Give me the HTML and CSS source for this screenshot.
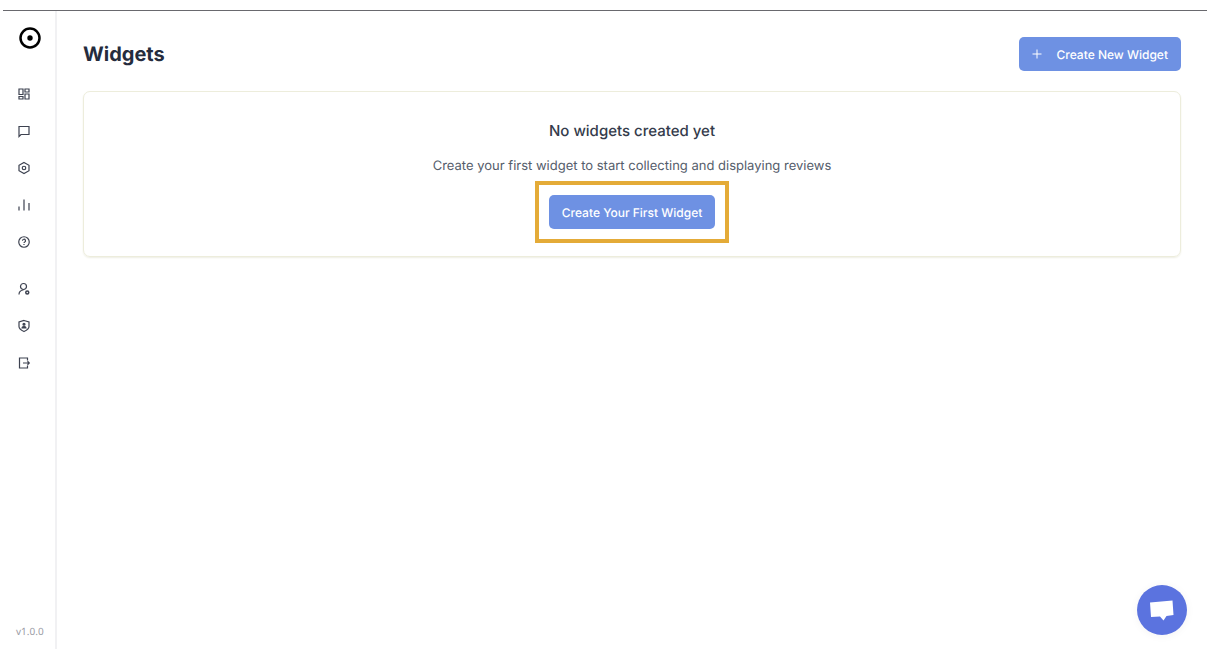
FILE: index.html
```html
<!DOCTYPE html>
<html lang="en">
<head>
<meta charset="utf-8">
<meta name="viewport" content="width=device-width, initial-scale=1">
<title>Widgets</title>
<link rel="stylesheet" href="styles.css">
</head>
<body>
<div class="app">
  <aside class="sidebar">
    <a class="logo" href="#" aria-label="Home">
      <svg viewBox="0 0 22 22" width="22" height="22"><circle cx="11" cy="11" r="9.5" fill="none" stroke="#000" stroke-width="2.5"/><circle cx="11" cy="11" r="2.7"/></svg>
    </a>
    <nav class="nav" aria-label="Main">
      <a class="nav-link" href="#" aria-label="Dashboard"><svg class="icon" viewBox="0 0 24 24"><path d="M2 2h8v11H2zM14 2h8v6h-8zM14 12h8v10h-8zM2 17h8v5H2z"/></svg></a>
      <a class="nav-link" href="#" aria-label="Reviews"><svg class="icon" viewBox="0 0 24 24"><path d="M2 23V3h20v16H6z"/></svg></a>
      <a class="nav-link" href="#" aria-label="Widgets"><svg class="icon" viewBox="0 0 24 24"><path d="M12 1 22 6.5v11L12 23 2 17.500v-11z"/><circle cx="12" cy="12" r="3.500"/></svg></a>
      <a class="nav-link" href="#" aria-label="Analytics"><svg class="icon" viewBox="0 0 24 24"><path d="M2 15v8M12 1v22M22 8v15"/></svg></a>
      <a class="nav-link" href="#" aria-label="Help"><svg class="icon" viewBox="0 0 24 24"><circle cx="12" cy="12" r="10.500"/><path d="M9 9.500a3 3 0 1 1 4.500 2.500c-1 .6-1.500 1-1.500 2.200M12 16v2.200"/></svg></a>
    </nav>
    <nav class="nav nav-account" aria-label="Account">
      <a class="nav-link" href="#" aria-label="Account settings"><svg class="icon" viewBox="0 0 24 24"><circle cx="11" cy="7" r="6"/><path d="M2 23c0-5 3-8.500 9-9"/><circle cx="18.500" cy="19" r="3" stroke-width="3"/></svg></a>
      <a class="nav-link" href="#" aria-label="Admin"><svg class="icon" viewBox="0 0 24 24"><path d="M12 1 22 4v9c0 5-4.500 7.500-10 10C6.500 20.500 2 18 2 13V4z"/><circle class="solid" cx="12" cy="8.500" r="2"/><path class="solid" d="M8 16c0-4 8-4 8 0z"/></svg></a>
      <a class="nav-link" href="#" aria-label="Log out"><svg class="icon" viewBox="0 0 24 24"><path d="M19 7V2H3v20h16v-5M10 12h13M19 8.500 22.500 12 19 15.500"/></svg></a>
    </nav>
    <p class="version">v1.0.0</p>
  </aside>
  <main class="main">
    <header class="page-header">
      <h1 class="page-title">Widgets</h1>
      <button class="button" type="button"><svg class="plus" viewBox="0 0 10 10" width="10" height="10"><path d="M5 .5v9M.5 5h9"/></svg>Create New Widget</button>
    </header>
    <section class="empty-card">
      <h2 class="empty-title">No widgets created yet</h2>
      <p class="empty-text">Create your first widget to start collecting and displaying reviews</p>
      <div class="highlight"><button class="button" type="button">Create Your First Widget</button></div>
    </section>
  </main>
</div>
<button class="chat" type="button" aria-label="Open chat">
  <svg viewBox="0 0 50 50" width="50" height="50"><path fill="#fff" d="M13 17.500 35.500 15.500 36.500 30 29.500 31 26.500 35.500 23 31.500 14 32z"/></svg>
</button>
</body>
</html>
```
FILE: styles.css
```css
* {
  box-sizing: border-box;
}

body {
  margin: 0;
  padding: 10px 8px 8px 3px;
  min-height: 100vh;
  display: flex;
  background: #fff;
  font-family: Inter, "Liberation Sans", sans-serif;
  text-rendering: geometricPrecision;
  color: #252c3d;
}

h1,
h2,
p {
  margin: 0;
}

.app {
  flex: 1;
  display: flex;
  border-top: 1px solid #69696e;
}

.sidebar {
  flex: none;
  width: 54px;
  display: flex;
  flex-direction: column;
  padding: 16px 0 10px;
  border-right: 2px solid #f1f1f3;
}

.logo {
  height: 22px;
  margin-left: 16px;
}

.logo svg {
  display: block;
}

.nav {
  display: flex;
  flex-direction: column;
  gap: 13px;
  margin: 33px 0 0 9px;
}

.nav-account {
  margin-top: 23px;
}

.nav-link {
  width: 24px;
  height: 24px;
  padding: 6px;
}

.icon {
  display: block;
  width: 12px;
  height: 12px;
  fill: none;
  stroke: #3d4250;
  stroke-width: 2.4;
  overflow: visible;
}

.solid {
  fill: #3d4250;
}

.version {
  margin-top: auto;
  padding-left: 13px;
  font-family: "Noto Sans", sans-serif;
  font-size: 10px;
  line-height: 16px;
  color: #9b9da6;
}

.main {
  flex: 1;
  padding: 26px;
}

.page-header {
  display: flex;
  justify-content: space-between;
  align-items: center;
  margin-bottom: 20px;
}

.page-title {
  font-size: 20px;
  line-height: 28px;
  font-weight: 700;
}

.button {
  display: flex;
  align-items: center;
  gap: 14px;
  height: 34px;
  padding: 0 13px;
  border: 0;
  border-radius: 5px;
  background: #6e91e3;
  color: #fff;
  font-family: inherit;
  text-rendering: inherit;
  font-size: 12px;
  font-weight: 500;
}

.plus {
  fill: none;
  stroke: #fff;
}

.empty-card {
  display: flex;
  flex-direction: column;
  align-items: center;
  padding: 27px 24px 13px;
  border: 1px solid #ededdc;
  border-radius: 7px;
  box-shadow: 0 1px 2px #eeeee4;
}

.empty-title {
  margin-bottom: 11px;
  font-size: 15px;
  line-height: 24px;
  font-weight: 500;
  color: #343b4b;
}

.empty-text {
  margin-bottom: 3px;
  font-size: 13px;
  line-height: 24px;
  color: #555d6b;
}

.highlight {
  padding: 10px;
  border: 4px solid #e4ab38;
}

.chat {
  position: fixed;
  right: 28px;
  bottom: 22px;
  width: 50px;
  height: 50px;
  padding: 0;
  border: 0;
  border-radius: 50%;
  background: #5b73df;
  box-shadow: 0 1px 8px #0000000d;
}

.chat svg {
  display: block;
}
```
